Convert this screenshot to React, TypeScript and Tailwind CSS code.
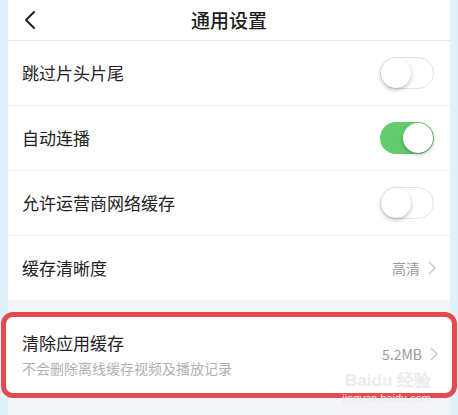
import React from "react";

const font = { fontFamily: '"Noto Sans CJK SC", "Noto Sans", sans-serif' };

function Toggle({ on }: { on: boolean }) {
  return (
    <div
      className={`relative w-[54px] h-[32px] rounded-full ${
        on ? "bg-[#63cb6c]" : "bg-white border border-[#e3e3e3]"
      }`}
    >
      <div
        className={`absolute w-[30px] h-[30px] rounded-full bg-white shadow-[0_2px_4px_rgba(0,0,0,0.25)] ${
          on ? "right-[1px] top-[1px]" : "left-[0px] top-[0px]"
        }`}
      />
    </div>
  );
}

function Chevron() {
  return (
    <svg width="8" height="14" viewBox="0 0 8 14" fill="none">
      <path d="M1 1l6 6-6 6" stroke="#c8c8c8" strokeWidth="1.4" />
    </svg>
  );
}

const rows = [
  { label: "跳过片头片尾", toggle: false },
  { label: "自动连播", toggle: true },
  { label: "允许运营商网络缓存", toggle: false },
];

export default function App() {
  return (
    <div className="w-[458px] h-[415px] bg-[#e0f1fc] overflow-hidden" style={font}>
      <div className="mx-[8px] h-full bg-[#f3f4f7] flex flex-col">
        <div className="relative h-[41px] bg-white border-b border-[#e8e8e8] flex items-center justify-center">
          <svg className="absolute left-[16px] top-[10px]" width="12" height="20" viewBox="0 0 12 20" fill="none">
            <path d="M10 2L2 10l8 8" stroke="#222" strokeWidth="2" strokeLinecap="round" strokeLinejoin="round" />
          </svg>
          <span className="text-[19px] text-[#1e1e1e] font-medium">通用设置</span>
        </div>

        {rows.map((r) => (
          <div
            key={r.label}
            className="h-[65px] bg-white border-b border-[#efefef] flex items-center justify-between pl-[14px] pr-[16px]"
          >
            <span className="text-[17px] text-[#222]">{r.label}</span>
            <Toggle on={r.toggle} />
          </div>
        ))}

        <div className="h-[64px] bg-white flex items-center justify-between pl-[14px] pr-[14px]">
          <span className="text-[17px] text-[#222]">缓存清晰度</span>
          <div className="flex items-center gap-[8px]">
            <span className="text-[14px] text-[#9b9b9b]">高清</span>
            <Chevron />
          </div>
        </div>

        <div className="relative mt-[12px] -mx-[7px] h-[86px] bg-white border-[5px] border-[#e24b4f] rounded-[12px] flex items-center justify-between pl-[16px] pr-[14px]">
          <div className="flex flex-col">
            <span className="text-[17px] text-[#222] leading-[24px]">清除应用缓存</span>
            <span className="text-[14px] text-[#b0b0b0] leading-[22px] mt-[2px]">
              不会删除离线缓存视频及播放记录
            </span>
          </div>
          <div className="flex items-center gap-[8px] -mt-[2px]">
            <span className="text-[14px] text-[#9b9b9b]">5.2MB</span>
            <Chevron />
          </div>
          <div className="absolute right-[21px] top-[55px] flex flex-col items-end leading-none pointer-events-none">
            <span className="text-[17px] font-bold text-[#ececec]" style={{ fontFamily: '"Liberation Sans", sans-serif' }}>
              Baidu 经验
            </span>
            <span className="text-[11px] text-[#ececec] mt-[4px]" style={{ fontFamily: '"Liberation Sans", sans-serif' }}>
              jingyan.baidu.com
            </span>
          </div>
        </div>
      </div>
    </div>
  );
}
